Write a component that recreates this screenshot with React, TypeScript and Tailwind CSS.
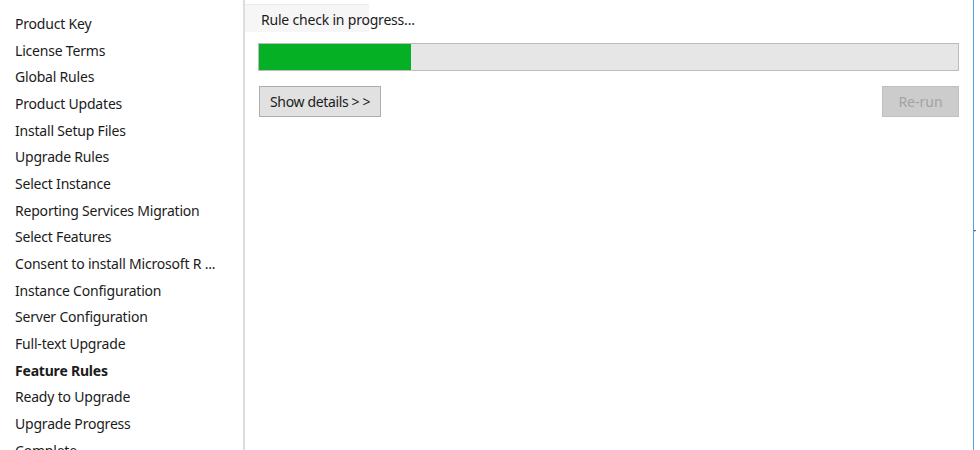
import React from 'react';

const steps = [
  'Product Key',
  'License Terms',
  'Global Rules',
  'Product Updates',
  'Install Setup Files',
  'Upgrade Rules',
  'Select Instance',
  'Reporting Services Migration',
  'Select Features',
  'Consent to install Microsoft R ...',
  'Instance Configuration',
  'Server Configuration',
  'Full-text Upgrade',
  'Feature Rules',
  'Ready to Upgrade',
  'Upgrade Progress',
  'Complete',
];

const current = 'Feature Rules';

const App = () => {
  const progress = 21.8;

  return (
    <div
      className="flex h-[450px] w-[980px] overflow-hidden bg-white text-[14px] text-[#1b1b1b]"
      style={{ fontFamily: '"Noto Sans", "Open Sans", sans-serif' }}
    >
      {/* step list */}
      <aside className="w-[245px] shrink-0 border-r-2 border-[#dcdce2] pt-[10px] pl-[15px]">
        <ul>
          {steps.map((s) => (
            <li
              key={s}
              className={
                'flex h-[26.7px] items-center whitespace-nowrap tracking-[-0.2px] ' +
                (s === current ? 'font-bold' : '')
              }
            >
              {s}
            </li>
          ))}
        </ul>
      </aside>

      {/* page body */}
      <main className="flex-1 border-r border-[#5a9fe6] pl-[13px] pr-[14px]">
        <div className="-ml-[13px] h-[34px] pt-[4px]">
          <div className="flex h-[28px] w-[124px] items-end border-t border-[#ececec] bg-[#f6f6f6] pb-[2px] pl-[16px]">
            <span className="whitespace-nowrap tracking-[-0.2px]">Rule check in progress...</span>
          </div>
        </div>
        <div className="mt-[9px] h-[28px] border border-[#bcbcbc] bg-[#e6e6e6]">
          <div className="h-full bg-[#06b025]" style={{ width: `${progress}%` }} />
        </div>
        <div className="mt-[15px] flex items-center justify-between">
          <button className="ml-px h-[31px] border border-[#adadad] bg-[#e1e1e1] px-[10px] tracking-[-0.35px]">
            Show details &gt; &gt;
          </button>
          <button
            disabled
            className="h-[31px] w-[77px] border border-[#bfbfbf] bg-[#cccccc] text-[#a3a3a3]"
          >
            Re-run
          </button>
        </div>
      </main>

      {/* clipped neighbour window */}
      <div className="flex w-[6px] shrink-0 items-start overflow-hidden pt-[222px]">
        <span className="-ml-[4px] text-[14px] text-[#3a3a6a]">r</span>
      </div>
    </div>
  );
};

export default App;
